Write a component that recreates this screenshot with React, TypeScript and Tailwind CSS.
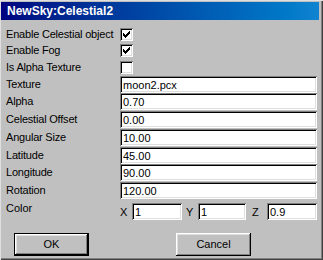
import * as React from 'react';

const sunken =
  'shadow-[inset_1px_1px_0_#808080,inset_-1px_-1px_0_#ffffff,inset_2px_2px_0_#000000,inset_-2px_-2px_0_#dfdfdf]';
const raised =
  'shadow-[inset_-1px_-1px_0_#000000,inset_1px_1px_0_#ffffff,inset_-2px_-2px_0_#808080,inset_2px_2px_0_#dfdfdf]';

// pixel checkmark, 7x7
const CHECK = [
  [6],
  [5, 6],
  [0, 4, 5, 6],
  [0, 1, 3, 4, 5],
  [0, 1, 2, 3, 4],
  [1, 2, 3],
  [2],
];

function CheckBox({ checked }: { checked: boolean }) {
  return (
    <div className={`w-[13px] h-[13px] bg-white flex items-center justify-center ${sunken}`}>
      {checked && (
        <svg width="7" height="7" viewBox="0 0 7 7" shapeRendering="crispEdges">
          {CHECK.map((xs, y) =>
            xs.map((x) => <rect key={`${x}-${y}`} x={x} y={y} width="1" height="1" fill="#000" />)
          )}
        </svg>
      )}
    </div>
  );
}

function Field({ value, className = '' }: { value: string; className?: string }) {
  return (
    <div className={`h-[17px] bg-white pl-[3px] pt-[2px] flex items-center leading-[13px] ${sunken} ${className}`}>
      {value}
    </div>
  );
}

const checks = [
  { label: 'Enable Celestial object', checked: true },
  { label: 'Enable Fog', checked: true },
  { label: 'Is Alpha Texture', checked: false },
];

const fields = [
  { label: 'Texture', value: 'moon2.pcx' },
  { label: 'Alpha', value: '0.70' },
  { label: 'Celestial Offset', value: '0.00' },
  { label: 'Angular Size', value: '10.00' },
  { label: 'Latitude', value: '45.00' },
  { label: 'Longitude', value: '90.00' },
  { label: 'Rotation', value: '120.00' },
];

export default function App() {
  return (
    <div
      className="w-[323px] h-[260px] overflow-hidden bg-[#c0c0c0] text-black text-[11px] leading-[13px] font-['Liberation_Sans',Arial,sans-serif] pt-[2px] pl-[1px] pr-[4px] flex flex-col shadow-[inset_1px_1px_0_#dfdfdf,inset_-1px_-1px_0_#404040,inset_-2px_-2px_0_#808080]"
    >
      <div className="h-[18px] shrink-0 bg-gradient-to-r from-[#000080] to-[#1084d0] pl-[6px] flex items-center">
        <span className="text-white font-bold text-[12px] leading-[18px]">NewSky:Celestial2</span>
      </div>

      <div className="pl-[5px] pr-[2px] mt-[6px] flex flex-col">
        {checks.map((c) => (
          <div key={c.label} className="h-[16.5px] grid grid-cols-[114px_1fr] items-center">
            <span className="tracking-[-0.2px]">{c.label}</span>
            <CheckBox checked={c.checked} />
          </div>
        ))}

        {fields.map((f) => (
          <div key={f.label} className="h-[17.75px] grid grid-cols-[114px_1fr] items-start">
            <span className="h-[17px] flex items-center tracking-[-0.2px]">{f.label}</span>
            <Field value={f.value} />
          </div>
        ))}

        <div className="mt-[3px] h-[17px] grid grid-cols-[114px_1fr] items-start">
          <span className="-mt-[1px]">Color</span>
          <div className="flex items-center h-[17px]">
            <span className="w-[12px] pt-[3px]">X</span>
            <Field value="1" className="w-[50px]" />
            <span className="w-[12px] ml-[4px] pt-[3px]">Y</span>
            <Field value="1" className="w-[48px]" />
            <span className="w-[15px] ml-[6px] pt-[3px]">Z</span>
            <Field value="0.9" className="w-[50px]" />
          </div>
        </div>

        <div className="mt-[13px] flex pl-[8px] gap-[87px]">
          <button className="w-[75px] h-[23px] border border-black bg-[#c0c0c0] p-0">
            <div className={`w-full h-full flex items-center justify-center ${raised}`}>OK</div>
          </button>
          <button className={`w-[75px] h-[23px] bg-[#c0c0c0] flex items-center justify-center ${raised}`}>
            Cancel
          </button>
        </div>
      </div>
    </div>
  );
}
